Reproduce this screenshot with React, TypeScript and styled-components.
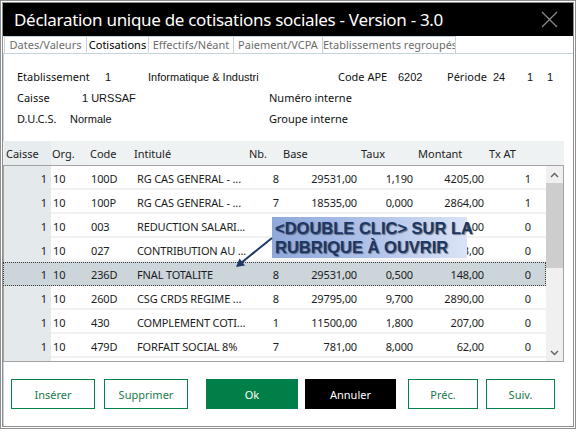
import React from "react";
import styled, { createGlobalStyle } from "styled-components";

const GlobalStyle = createGlobalStyle`
  html, body {
    margin: 0;
    padding: 0;
    background: #ffffff;
  }
  body {
    font-family: "Noto Sans", "DejaVu Sans", sans-serif;
  }
  * {
    box-sizing: border-box;
  }
`;

const Window = styled.div`
  position: relative;
  width: 576px;
  height: 429px;
  border: 3px double #8e8e8e;
  background: #ffffff;
  display: flex;
  flex-direction: column;
`;

const TitleBar = styled.div`
  height: 33px;
  flex: none;
  background: #000;
  color: #fff;
  display: flex;
  align-items: center;
  justify-content: space-between;
  padding: 0 15px 0 11px;
`;

const Title = styled.div`
  font-size: 17px;
  letter-spacing: -0.3px;
  white-space: nowrap;
`;

const TabStrip = styled.div`
  height: 17px;
  flex: none;
  display: flex;
  padding-left: 1px;
`;

const Tab = styled.div<{ $w: number; $active?: boolean }>`
  width: ${(p) => p.$w}px;
  margin-right: -1px;
  border: 1px solid #c5d4dc;
  border-bottom: ${(p) => (p.$active ? "1px solid #fff" : "none")};
  background: #fff;
  color: ${(p) => (p.$active ? "#000" : "#6d6d6d")};
  font-size: 11px;
  line-height: 15px;
  text-align: center;
  white-space: nowrap;
  overflow: hidden;
  position: relative;
  z-index: ${(p) => (p.$active ? 1 : 0)};
`;

const Panel = styled.div`
  flex: 1;
  border-top: 1px solid #c5d4dc;
  border-left: 1px solid #c5d4dc;
  display: flex;
  flex-direction: column;
`;

const Form = styled.div`
  padding: 12px 0 0 13px;
  display: flex;
  flex-direction: column;
`;

const FormRow = styled.div`
  height: 21px;
  display: flex;
  align-items: center;
`;

const Label = styled.span<{ $w?: number }>`
  width: ${(p) => (p.$w ? `${p.$w}px` : "auto")};
  flex: none;
  font-size: 11px;
  color: #111;
  white-space: nowrap;
`;

const Value = styled.span<{ $w?: number }>`
  width: ${(p) => (p.$w ? `${p.$w}px` : "auto")};
  flex: none;
  font-family: "Liberation Sans", Arial, sans-serif;
  font-size: 11px;
  color: #111;
  white-space: nowrap;
`;

const GridArea = styled.div`
  position: relative;
  margin: 12px 0 0 -1px;
  width: 561px;
`;

const HeaderRow = styled.div`
  height: 24px;
  display: flex;
  background: #eef2f3;
  padding-left: 1px;
`;

const HeaderCell = styled.div<{ $w: number; $pl: number; $first?: boolean }>`
  width: ${(p) => p.$w}px;
  flex: none;
  padding-left: ${(p) => p.$pl}px;
  display: flex;
  align-items: center;
  font-size: 11px;
  color: #222;
  background: ${(p) => (p.$first ? "#e7ecee" : "transparent")};
  white-space: nowrap;
`;

const Body = styled.div`
  position: relative;
  height: 197px;
  border: 1px solid #a3a3a3;
  display: flex;
`;

const Rows = styled.div`
  width: 542px;
  flex: none;
  background: linear-gradient(to right, #e4e9eb 47px, #ffffff 47px);
`;

const Row = styled.div<{ $selected?: boolean }>`
  height: 24px;
  display: flex;
  position: relative;
  background: ${(p) => (p.$selected ? "#ccd5da" : "transparent")};
  outline: ${(p) => (p.$selected ? "1px dotted #3a3a3a" : "none")};
  outline-offset: -1px;
  margin-left: ${(p) => (p.$selected ? "-1px" : "0")};
  padding-left: ${(p) => (p.$selected ? "1px" : "0")};
`;

const Cell = styled.div<{
  $w: number;
  $align: "left" | "right";
  $pad: number;
  $key?: boolean;
  $selected?: boolean;
}>`
  width: ${(p) => p.$w}px;
  flex: none;
  display: flex;
  align-items: center;
  justify-content: ${(p) => (p.$align === "right" ? "flex-end" : "flex-start")};
  padding-left: ${(p) => (p.$align === "left" ? p.$pad : 0)}px;
  padding-right: ${(p) => (p.$align === "right" ? p.$pad : 0)}px;
  font-size: 11px;
  letter-spacing: -0.15px;
  color: #1c1c1c;
  white-space: nowrap;
  overflow: hidden;
  box-shadow: ${(p) =>
    p.$key || p.$selected ? "none" : "inset 0 -2px 0 #f1f1f1"};
`;

const Scrollbar = styled.div`
  width: 17px;
  flex: none;
  background: #f0f0f0;
  display: flex;
  flex-direction: column;
`;

const ScrollArrow = styled.div`
  height: 17px;
  display: flex;
  align-items: center;
  justify-content: center;
  flex: none;
`;

const Thumb = styled.div`
  height: 85px;
  background: #cdcdcd;
  flex: none;
`;

const Track = styled.div`
  flex: 1;
`;

const Callout = styled.div`
  position: absolute;
  left: 268px;
  top: 51px;
  width: 195px;
  height: 41px;
  padding: 2px 0 0 3px;
  background: linear-gradient(to right, #8ea8da 0%, #b3c5ea 55%, #dbe4f6 100%);
  font-family: "Liberation Sans", Arial, sans-serif;
  font-weight: bold;
  font-size: 16.5px;
  line-height: 19px;
  color: #1d3764;
  text-shadow: 1px 1px 1px rgba(0, 0, 0, 0.45);
  white-space: nowrap;
`;

const Pointer = styled.svg`
  position: absolute;
  left: 222px;
  top: 60px;
  overflow: visible;
`;

const ButtonBar = styled.div`
  display: flex;
  padding: 17px 0 0 7px;
`;

const Group = styled.div<{ $gap: number; $ml?: number }>`
  display: flex;
  gap: ${(p) => p.$gap}px;
  margin-left: ${(p) => p.$ml ?? 0}px;
`;

const Button = styled.button<{ $w: number; $variant?: "ok" | "cancel" }>`
  width: ${(p) => p.$w}px;
  height: 30px;
  border: ${(p) => (p.$variant ? "none" : "1px solid #08804a")};
  background: ${(p) =>
    p.$variant === "ok" ? "#008048" : p.$variant === "cancel" ? "#000" : "#fff"};
  color: ${(p) => (p.$variant ? "#fff" : "#17794a")};
  font-family: "Noto Sans", "DejaVu Sans", sans-serif;
  font-size: 11px;
  padding: 0;
  cursor: pointer;
`;

type Col = { w: number; align: "left" | "right"; pad: number; hp: number };

const cols: Col[] = [
  { w: 47, align: "right", pad: 4, hp: 2 },
  { w: 36, align: "left", pad: 2, hp: 1 },
  { w: 46, align: "left", pad: 4, hp: 3 },
  { w: 114, align: "left", pad: 4, hp: 1 },
  { w: 34, align: "right", pad: 2, hp: 2 },
  { w: 80, align: "right", pad: 4, hp: 2 },
  { w: 56, align: "right", pad: 4, hp: 0 },
  { w: 70, align: "right", pad: 3, hp: 1 },
  { w: 59, align: "right", pad: 15, hp: 2 },
];

const headers = ["Caisse", "Org.", "Code", "Intitulé", "Nb.", "Base", "Taux", "Montant", "Tx AT"];

// rows 3 and 4 sit under the callout: only the tail of the amount shows
const rows = [
  ["1", "10", "100D", "RG CAS GENERAL - ...", "8", "29531,00", "1,190", "4205,00", "1"],
  ["1", "10", "100P", "RG CAS GENERAL - ...", "7", "18535,00", "0,000", "2864,00", "1"],
  ["1", "10", "003", "REDUCTION SALARI...", "", "", "", "5,00", "0"],
  ["1", "10", "027", "CONTRIBUTION AU ...", "", "", "", "3,00", "0"],
  ["1", "10", "236D", "FNAL TOTALITE", "8", "29531,00", "0,500", "148,00", "0"],
  ["1", "10", "260D", "CSG CRDS REGIME ...", "8", "29795,00", "9,700", "2890,00", "0"],
  ["1", "10", "430", "COMPLEMENT COTI...", "1", "11500,00", "1,800", "207,00", "0"],
  ["1", "10", "479D", "FORFAIT SOCIAL 8%", "7", "781,00", "8,000", "62,00", "0"],
];

const tabs = [
  { label: "Dates/Valeurs", w: 83 },
  { label: "Cotisations", w: 63, active: true },
  { label: "Effectifs/Néant", w: 86 },
  { label: "Paiement/VCPA", w: 90 },
  { label: "Etablissements regroupés", w: 134 },
];

const Chevron = ({ up }: { up?: boolean }) => (
  <svg width="9" height="6" viewBox="0 0 9 6">
    <polyline
      points={up ? "1,5 4.5,1.5 8,5" : "1,1 4.5,4.5 8,1"}
      fill="none"
      stroke="#606060"
      strokeWidth="1.4"
    />
  </svg>
);

function App() {
  return (
    <>
      <GlobalStyle />
      <Window>
        <TitleBar>
          <Title>Déclaration unique de cotisations sociales - Version - 3.0</Title>
          <svg width="17" height="17" viewBox="0 0 17 17">
            <path d="M1 1 L16 16 M16 1 L1 16" stroke="#8a8a8a" strokeWidth="1.3" />
          </svg>
        </TitleBar>
        <TabStrip>
          {tabs.map((t) => (
            <Tab key={t.label} $w={t.w} $active={t.active}>
              {t.label}
            </Tab>
          ))}
        </TabStrip>
        <Panel>
          <Form>
            <FormRow>
              <Label $w={88}>Etablissement</Label>
              <Value $w={43}>1</Value>
              <Value $w={190}>Informatique &amp; Industri</Value>
              <Label $w={60}>Code APE</Label>
              <Value $w={49}>6202</Value>
              <Label $w={46}>Période</Label>
              <Value $w={34}>24</Value>
              <Value $w={20}>1</Value>
              <Value>1</Value>
            </FormRow>
            <FormRow>
              <Label $w={65}>Caisse</Label>
              <Value $w={187}>1 URSSAF</Value>
              <Label>Numéro interne</Label>
            </FormRow>
            <FormRow>
              <Label $w={53}>D.U.C.S.</Label>
              <Value $w={199}>Normale</Value>
              <Label>Groupe interne</Label>
            </FormRow>
          </Form>

          <GridArea>
            <HeaderRow>
              {headers.map((h, i) => (
                <HeaderCell key={h} $w={cols[i].w} $pl={cols[i].hp} $first={i === 0}>
                  {h}
                </HeaderCell>
              ))}
            </HeaderRow>
            <Body>
              <Rows>
                {rows.map((r, ri) => {
                  const selected = ri === 4;
                  return (
                    <Row key={ri} $selected={selected}>
                      {r.map((v, ci) => (
                        <Cell
                          key={ci}
                          $w={cols[ci].w}
                          $align={cols[ci].align}
                          $pad={cols[ci].pad}
                          $key={ci === 0}
                          $selected={selected}
                        >
                          {v}
                        </Cell>
                      ))}
                    </Row>
                  );
                })}
              </Rows>
              <Scrollbar>
                <ScrollArrow>
                  <Chevron up />
                </ScrollArrow>
                <Thumb />
                <Track />
                <ScrollArrow>
                  <Chevron />
                </ScrollArrow>
              </Scrollbar>

              <Callout>
                &lt;DOUBLE CLIC&gt; SUR LA
                <br />
                RUBRIQUE À OUVRIR
              </Callout>
              <Pointer width="50" height="50" viewBox="0 0 50 50">
                <line x1="46" y1="12" x2="15" y2="37" stroke="#1f3864" strokeWidth="2" />
                <polygon points="10,41 19,39.5 13.5,32.5" fill="#1f3864" />
              </Pointer>
            </Body>
          </GridArea>

          <ButtonBar>
            <Group $gap={9}>
              <Button $w={84}>Insérer</Button>
              <Button $w={84}>Supprimer</Button>
            </Group>
            <Group $gap={7} $ml={18}>
              <Button $w={92} $variant="ok">
                Ok
              </Button>
              <Button $w={91} $variant="cancel">
                Annuler
              </Button>
            </Group>
            <Group $gap={8} $ml={12}>
              <Button $w={70}>Préc.</Button>
              <Button $w={69}>Suiv.</Button>
            </Group>
          </ButtonBar>
        </Panel>
      </Window>
    </>
  );
}

export default App;
